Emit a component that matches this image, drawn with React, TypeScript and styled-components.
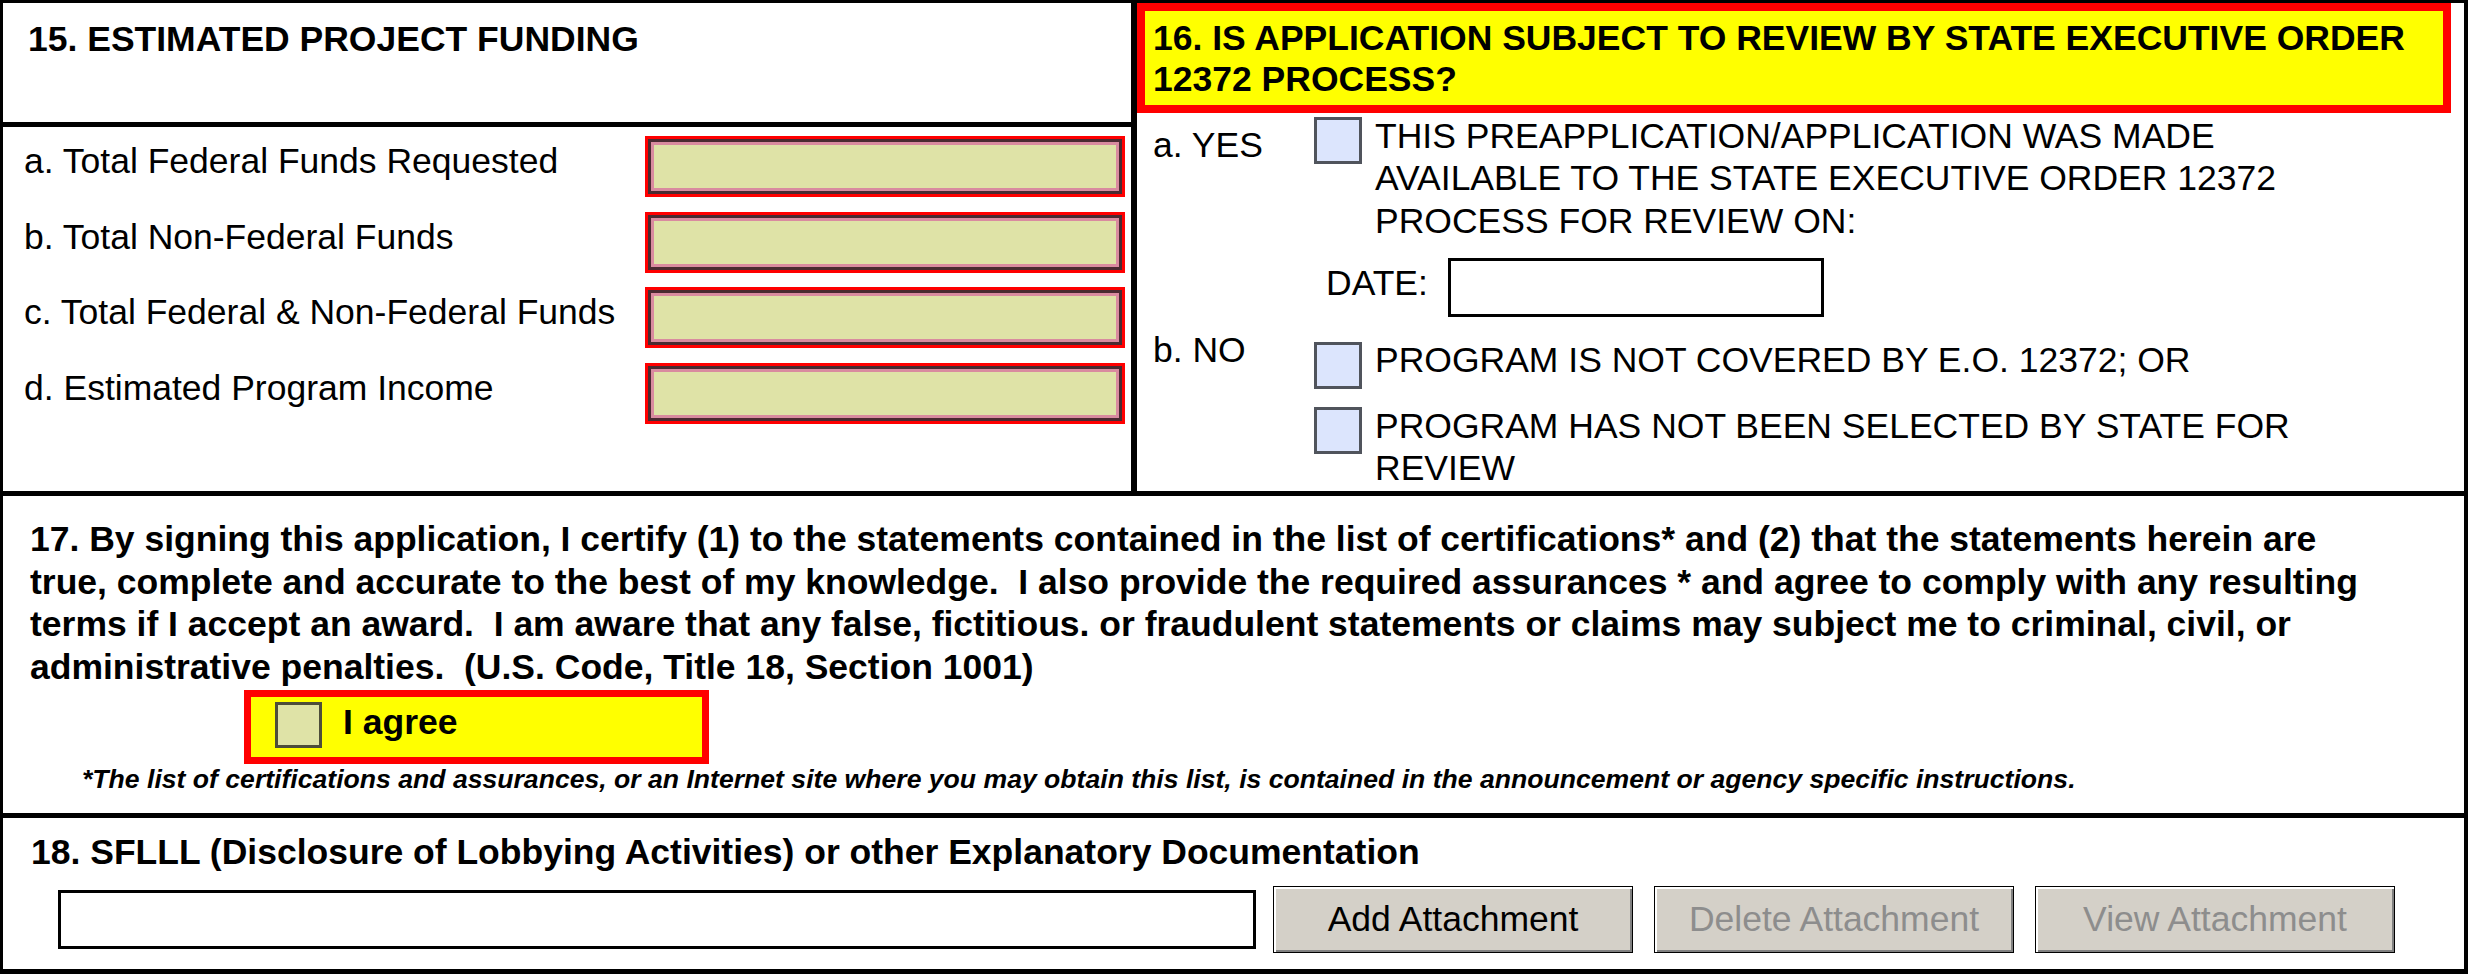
import * as React from "react";
import styled, { createGlobalStyle } from "styled-components";

const GlobalStyle = createGlobalStyle`
  body {
    margin: 0;
    background: #ffffff;
    font-family: "Liberation Sans", Arial, sans-serif;
    color: #000000;
  }
`;

const Form = styled.div`
  box-sizing: border-box;
  width: 2468px;
  height: 974px;
  display: flex;
  flex-direction: column;
  background: #ffffff;
  border-style: solid;
  border-color: #000000;
  border-width: 3px 4px 5px 3px;
`;

const TopSection = styled.section`
  box-sizing: border-box;
  height: 493px;
  flex-shrink: 0;
  display: flex;
  border-bottom: 5px solid #000000;
`;

const FundingColumn = styled.div`
  box-sizing: border-box;
  width: 1134px;
  display: flex;
  flex-direction: column;
  border-right: 6px solid #000000;
`;

const FundingHeader = styled.div`
  box-sizing: border-box;
  height: 124px;
  padding: 16px 0 0 25px;
  border-bottom: 5px solid #000000;
`;

const SectionTitle = styled.div`
  font-size: 35.5px;
  font-weight: bold;
  line-height: 41px;
  white-space: pre;
`;

const FundsList = styled.div`
  display: flex;
  flex-direction: column;
  padding: 9px 6px 0 21px;
`;

const FundRow = styled.div`
  height: 75.5px;
  display: flex;
  align-items: flex-start;
  justify-content: space-between;
`;

const FieldLabel = styled.label`
  padding-top: 5px;
  font-size: 35.5px;
  line-height: 41px;
  white-space: nowrap;
`;

const AmountInput = styled.input`
  box-sizing: border-box;
  width: 480px;
  height: 61px;
  margin: 0;
  padding: 0;
  outline: none;
  background: #dfe3a7;
  border: 3px solid #ff0000;
  box-shadow: inset 0 0 0 3px #4a2a31, inset 0 0 0 6px #d98b9f;
`;

const ReviewColumn = styled.div`
  flex: 1;
  display: flex;
  flex-direction: column;
`;

const ReviewHeader = styled.div`
  box-sizing: border-box;
  height: 110px;
  margin-right: 13px;
  padding: 7px 0 0 8px;
  background: #ffff00;
  border: 8px solid #ff0000;
`;

const ReviewBody = styled.div`
  display: flex;
  flex-direction: column;
  padding-left: 16px;
`;

const ChoiceRow = styled.div<{ $top: number }>`
  display: flex;
  align-items: flex-start;
  margin-top: ${(p) => p.$top}px;
`;

const ChoiceLabel = styled.div<{ $top: number }>`
  width: 161px;
  flex-shrink: 0;
  margin-top: ${(p) => p.$top}px;
  font-size: 35.5px;
  line-height: 42.5px;
  white-space: nowrap;
`;

const ChoiceBox = styled.input<{ $top: number }>`
  appearance: none;
  box-sizing: border-box;
  flex-shrink: 0;
  width: 48px;
  height: 47px;
  margin: ${(p) => p.$top}px 13px 0 0;
  background: #dce5fd;
  border: 3px solid #50545c;
  border-radius: 0;
`;

const ChoiceText = styled.div<{ $top: number }>`
  margin-top: ${(p) => p.$top}px;
  font-size: 35.5px;
  line-height: 42.5px;
  white-space: pre;
`;

const DateRow = styled.div`
  display: flex;
  align-items: flex-start;
  gap: 20px;
  margin: 16px 0 0 173px;
`;

const DateLabel = styled.div`
  margin-top: 3.6px;
  font-size: 35.5px;
  line-height: 42.5px;
`;

const DateField = styled.input`
  box-sizing: border-box;
  width: 376px;
  height: 59px;
  margin: 0;
  background: #ffffff;
  border: 3px solid #000000;
  outline: none;
`;

const CertifySection = styled.section`
  box-sizing: border-box;
  height: 322px;
  flex-shrink: 0;
  padding: 22px 0 0 27px;
  border-bottom: 5px solid #000000;
`;

const Certification = styled.div`
  font-size: 35.5px;
  font-weight: bold;
  line-height: 42.6px;
  white-space: pre;
`;

const AgreeBox = styled.label`
  box-sizing: border-box;
  width: 465px;
  height: 74px;
  margin: 2px 0 0 214px;
  padding: 5px 0 0 24px;
  display: flex;
  align-items: flex-start;
  gap: 21px;
  background: #ffff00;
  border: 7px solid #ff0000;
`;

const AgreeCheck = styled.input`
  appearance: none;
  box-sizing: border-box;
  width: 47px;
  height: 46px;
  margin: 0;
  background: #dfe3a7;
  border: 3px solid #4d4d3a;
  border-radius: 0;
`;

const AgreeText = styled.span`
  font-size: 35.5px;
  font-weight: bold;
  line-height: 41px;
`;

const Footnote = styled.div`
  margin-left: 52px;
  font-size: 26.6px;
  font-weight: bold;
  font-style: italic;
  line-height: 30px;
  white-space: nowrap;
`;

const AttachSection = styled.section`
  flex: 1;
  padding: 13.6px 0 0 28px;
`;

const AttachRow = styled.div`
  display: flex;
  align-items: center;
  margin: 13px 0 0 27px;
`;

const AttachField = styled.input`
  box-sizing: border-box;
  width: 1198px;
  height: 59px;
  margin: 0 17px 0 0;
  background: #ffffff;
  border: 3px solid #000000;
  outline: none;
`;

const AttachButton = styled.button`
  box-sizing: border-box;
  width: 360px;
  height: 67px;
  margin: 0 21px 0 0;
  padding: 0;
  font-family: "Liberation Sans", Arial, sans-serif;
  font-size: 35.5px;
  color: #000000;
  background: #d4d0c8;
  border: 1px solid #000000;
  border-radius: 0;
  box-shadow: inset 2px 2px 0 #ffffff, inset -2px -2px 0 #808080;

  &:disabled {
    color: #8d8d8d;
  }
`;

const funds = [
  "a. Total Federal Funds Requested",
  "b. Total Non-Federal Funds",
  "c. Total Federal & Non-Federal Funds",
  "d. Estimated Program Income",
];

const certLines = [
  "17. By signing this application, I certify (1) to the statements contained in the list of certifications* and (2) that the statements herein are",
  "true, complete and accurate to the best of my knowledge.  I also provide the required assurances * and agree to comply with any resulting",
  "terms if I accept an award.  I am aware that any false, fictitious. or fraudulent statements or claims may subject me to criminal, civil, or",
  "administrative penalties.  (U.S. Code, Title 18, Section 1001)",
];

const App: React.FC = () => {
  return (
    <>
      <GlobalStyle />
      <Form>
        <TopSection>
          <FundingColumn>
            <FundingHeader>
              <SectionTitle>15. ESTIMATED PROJECT FUNDING</SectionTitle>
            </FundingHeader>
            <FundsList>
              {funds.map((label) => (
                <FundRow key={label}>
                  <FieldLabel>{label}</FieldLabel>
                  <AmountInput type="text" />
                </FundRow>
              ))}
            </FundsList>
          </FundingColumn>

          <ReviewColumn>
            <ReviewHeader>
              <SectionTitle>
                {"16. IS APPLICATION SUBJECT TO REVIEW BY STATE EXECUTIVE ORDER\n12372 PROCESS?"}
              </SectionTitle>
            </ReviewHeader>
            <ReviewBody>
              <ChoiceRow $top={0}>
                <ChoiceLabel $top={10.6}>a. YES</ChoiceLabel>
                <ChoiceBox type="checkbox" $top={4} />
                <ChoiceText $top={1.6}>
                  {"THIS PREAPPLICATION/APPLICATION WAS MADE\nAVAILABLE TO THE STATE EXECUTIVE ORDER 12372\nPROCESS FOR REVIEW ON:"}
                </ChoiceText>
              </ChoiceRow>
              <DateRow>
                <DateLabel>DATE:</DateLabel>
                <DateField type="text" />
              </DateRow>
              <ChoiceRow $top={11.6}>
                <ChoiceLabel $top={0}>b. NO</ChoiceLabel>
                <ChoiceBox type="checkbox" $top={13.4} />
                <ChoiceText $top={10}>PROGRAM IS NOT COVERED BY E.O. 12372; OR</ChoiceText>
              </ChoiceRow>
              <ChoiceRow $top={15.6}>
                <ChoiceLabel $top={0} />
                <ChoiceBox type="checkbox" $top={2.4} />
                <ChoiceText $top={0}>
                  {"PROGRAM HAS NOT BEEN SELECTED BY STATE FOR\nREVIEW"}
                </ChoiceText>
              </ChoiceRow>
            </ReviewBody>
          </ReviewColumn>
        </TopSection>

        <CertifySection>
          {certLines.map((line) => (
            <Certification key={line}>{line}</Certification>
          ))}
          <AgreeBox>
            <AgreeCheck type="checkbox" />
            <AgreeText>I agree</AgreeText>
          </AgreeBox>
          <Footnote>
            *The list of certifications and assurances, or an Internet site where you may obtain this list, is contained in the announcement or agency specific instructions.
          </Footnote>
        </CertifySection>

        <AttachSection>
          <SectionTitle>18. SFLLL (Disclosure of Lobbying Activities) or other Explanatory Documentation</SectionTitle>
          <AttachRow>
            <AttachField type="text" />
            <AttachButton>Add Attachment</AttachButton>
            <AttachButton disabled>Delete Attachment</AttachButton>
            <AttachButton disabled>View Attachment</AttachButton>
          </AttachRow>
        </AttachSection>
      </Form>
    </>
  );
};

export default App;
